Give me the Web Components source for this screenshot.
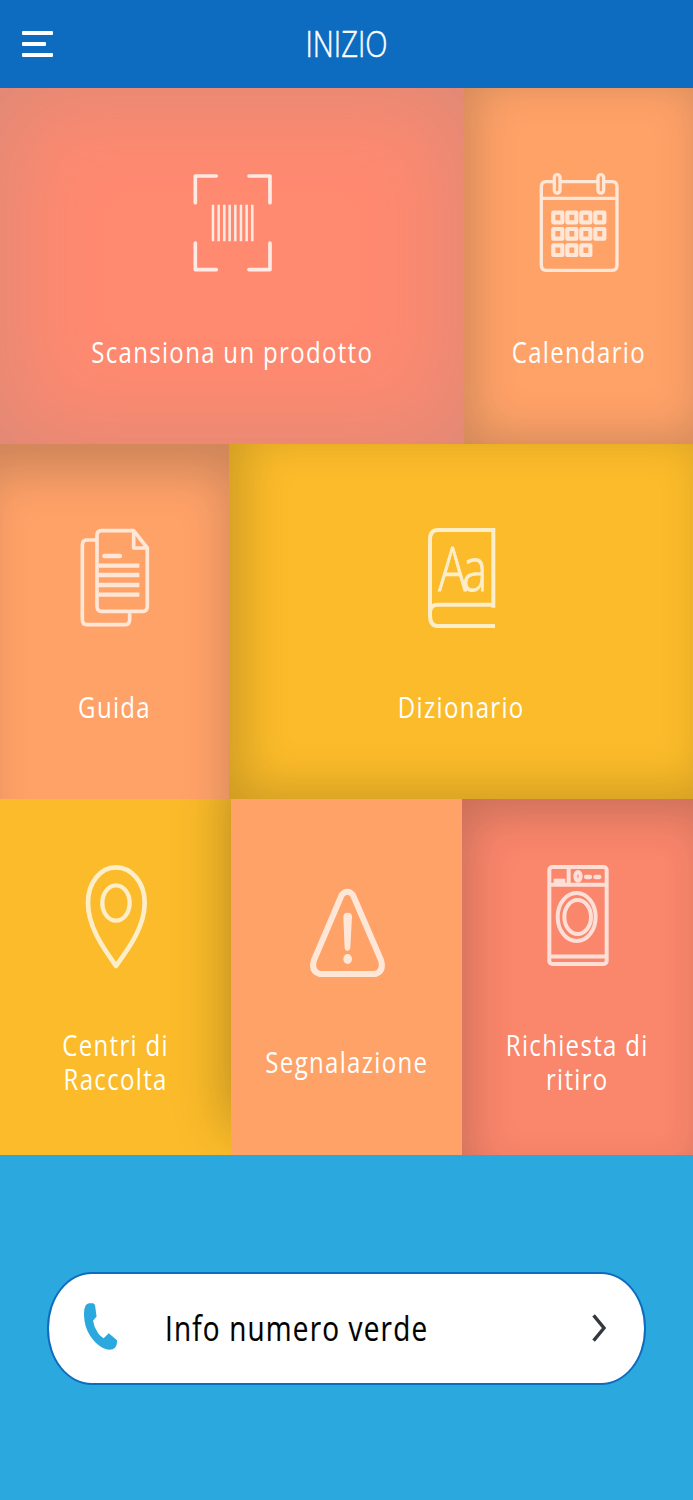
<!DOCTYPE html>
<html lang="it">
<head>
<meta charset="utf-8">
<title>Inizio</title>
<style>
    body {
        margin: 0;
        background: #2ba9df;
        font-family: "Open Sans", "Noto Sans", sans-serif;
    }
</style>
</head>
<body>
<home-page></home-page>

<script>
const icons = {
    scan: { box: '70 68 238 298', w: 79.3, h: 99.3, body: `
        <g stroke-width="11" stroke-linecap="round" stroke-linejoin="round">
            <path d="M77 157V77H140M238 77H301V157M77 278V358H140M238 358H301V278"/>
        </g>
        <path stroke-width="7.5" d="M130 163V273M147 163V273M164 163V273M180 163V273M197 163V273M214 163V273M231 163V273M248 163V273"/>` },
    calendar: { box: '58 38 240 300', w: 80, h: 100, body: `
        <g stroke-width="10">
            <path d="M102 64H79Q65 64 65 80V314Q65 330 79 330H278Q292 330 292 314V80Q292 64 278 64H254M233 64H123M65 114H292"/>
            <rect x="104" y="43" width="17" height="55" rx="8"/>
            <rect x="235" y="43" width="17" height="55" rx="8"/>
        </g>
        <g stroke-width="12.5" stroke-linejoin="round">
            <path d="M101 157h27v29h-27zM143 157h27v29h-27zM185 157h27v29h-27zM227 157h27v29h-27z"/>
            <path d="M101 206h27v29h-27zM143 206h27v29h-27zM185 206h27v29h-27zM227 206h27v29h-27z"/>
            <path d="M101 255h27v29h-27zM143 255h27v29h-27zM185 255h27v29h-27z"/>
        </g>` },
    guide: { box: '60 40 210 300', w: 70, h: 100, body: `
        <g stroke-width="11" stroke-linejoin="round">
            <path d="M110 76H80Q67 76 67 92V314Q67 330 80 330H196Q209 330 209 314V296"/>
            <path d="M124 48H221L262 100V274Q262 290 249 290H124Q111 290 111 274V64Q111 48 124 48Z"/>
            <path d="M221 52V100H260"/>
        </g>
        <g stroke-width="13">
            <path stroke-linecap="round" d="M133 124H180"/>
            <path d="M115 153H238M115 181H238M115 211H238M115 240H238"/>
        </g>` },
    dictionary: { box: '50 36 210 306', w: 70, h: 102, body: `
        <g stroke-width="12">
            <path d="M249 278V45H82Q59 45 59 75V300Q59 333 82 333H254"/>
            <path d="M59 295Q59 269 80 269H249"/>
        </g>
        <text transform="translate(84 229) scale(.78 1)" font-family="Open Sans" font-weight="300" font-size="181" letter-spacing="-17" fill="#fff" stroke-width="3">Aa</text>` },
    pin: { box: '46 42 186 314', w: 62, h: 104.6, body: `
        <path stroke-width="14" stroke-linejoin="round" d="M139 348C116 312 55 240 55 158C55 98 92 52 139 52S225 98 225 158C225 240 163 312 139 348Z"/>
        <ellipse cx="139" cy="159" rx="41" ry="53" stroke-width="13"/>` },
    warning: { box: '44 54 226 270', w: 75.3, h: 90, body: `
        <path stroke-width="18" d="M139 75Q156 55 173 75L257 270Q267 304 240 312H73Q46 304 56 270Z"/>
        <path fill="#fff" stroke="none" d="M144 140Q144 128 157 128T170 140L165 233Q163 242 156 242T148 233Z"/>
        <ellipse cx="157" cy="267" rx="13" ry="15" fill="#fff" stroke="none"/>` },
    washer: { box: '52 44 186 308', w: 62, h: 102.6, body: `
        <g stroke-width="12">
            <rect x="59" y="53" width="172" height="291" rx="9"/>
            <path d="M59 106H231M59 322H231M117 53V106"/>
            <ellipse cx="141" cy="203" rx="57" ry="72"/>
            <ellipse cx="144" cy="203" rx="40" ry="51"/>
            <ellipse cx="145" cy="81" rx="8" ry="13"/>
        </g>
        <path stroke-width="13" stroke-linecap="round" d="M169 83H181M197 83H209"/>
        <path stroke-width="18" d="M72 97H107"/>` },
    phone: { box: '113 128 84 140', w: 33, h: 47, body: `
        <path fill="#2ba9df" stroke="none" d="M113 158Q114 130 126 129H136Q141 130 142 142L145 168L136 181Q138 199 149 218Q155 228 163 233L176 218L197 239Q198 260 186 266Q174 270 160 261C136 244 112 210 113 158Z"/>` },
    chevron: { box: '0 0 14 28', w: 14, h: 28, body: `
        <path stroke="#333a3f" stroke-width="3.4" d="M1.6 1.4L12 14L1.6 26.6"/>` }
};

class AppIcon extends HTMLElement {
    constructor() {
        super();
        this.attachShadow({ mode: 'open' });
    }

    connectedCallback() {
        const icon = icons[this.getAttribute('name')];
        this.shadowRoot.innerHTML = `
            <style>
                :host { display: block; }
                svg { display: block; }
            </style>
            <svg width="${icon.w}" height="${icon.h}" viewBox="${icon.box}" preserveAspectRatio="none" fill="none" stroke="#fff">${icon.body}</svg>`;
    }
}

class AppHeader extends HTMLElement {
    constructor() {
        super();
        this.attachShadow({ mode: 'open' });
        this.shadowRoot.innerHTML = `
            <style>
                :host {
                    display: grid;
                    grid-template-columns: 60px 1fr 60px;
                    align-items: center;
                    box-sizing: border-box;
                    height: 88px;
                    background: #0d6cbf;
                    color: #fff;
                }
                .menu {
                    display: flex;
                    flex-direction: column;
                    gap: 7px;
                    padding-left: 22px;
                }
                .menu i {
                    width: 31px;
                    height: 4px;
                    border-radius: 1px;
                    background: #fff;
                }
                .menu i:nth-child(2) { width: 24px; }
                h1 {
                    margin: 0;
                    font-size: 36px;
                    font-weight: 300;
                    line-height: 40px;
                    text-align: center;
                    transform: scaleX(.81);
                    -webkit-text-stroke: .5px #fff;
                }
            </style>
            <div class="menu"><i></i><i></i><i></i></div>
            <h1><slot></slot></h1>`;
    }
}

class MenuTile extends HTMLElement {
    constructor() {
        super();
        this.attachShadow({ mode: 'open' });
    }

    connectedCallback() {
        this.shadowRoot.innerHTML = `
            <style>
                :host {
                    display: grid;
                    grid-template-rows: var(--label-top, 229px) 68px;
                    justify-items: center;
                    align-content: start;
                    background: var(--tile-color);
                    color: #fff;
                }
                app-icon {
                    margin: var(--icon-top, 84px) 0 0 var(--icon-left, 0px);
                    opacity: var(--icon-opacity, .74);
                }
                .label {
                    align-self: center;
                    font-size: 30px;
                    line-height: 34px;
                    letter-spacing: 1.65px;
                    text-align: center;
                    white-space: nowrap;
                    transform: scaleX(.8);
                }
            </style>
            <app-icon name="${this.getAttribute('icon')}"></app-icon>
            <div class="label"><slot></slot></div>`;
    }
}

class InfoButton extends HTMLElement {
    constructor() {
        super();
        this.attachShadow({ mode: 'open' });
        this.shadowRoot.innerHTML = `
            <style>
                :host {
                    display: flex;
                    align-items: center;
                    box-sizing: border-box;
                    height: 113px;
                    padding: 0 38px 0 35px;
                    border: 2px solid #0d6cbf;
                    border-radius: 45px / 56px;
                    background: #fff;
                    color: #000;
                }
                .phone { margin: -5px 48px 0 0; }
                .text {
                    flex: 1;
                    margin-bottom: 2px;
                    font-size: 34px;
                    line-height: 40px;
                    letter-spacing: 1.45px;
                    white-space: nowrap;
                    transform: scaleX(.82);
                    transform-origin: left;
                    -webkit-text-stroke: .2px #000;
                }
                .chevron { margin: -2px 0 0; }
            </style>
            <app-icon class="phone" name="phone"></app-icon>
            <div class="text"><slot></slot></div>
            <app-icon class="chevron" name="chevron"></app-icon>`;
    }
}

class HomePage extends HTMLElement {
    constructor() {
        super();
        this.attachShadow({ mode: 'open' });
        this.shadowRoot.innerHTML = `
            <style>
                :host {
                    display: flex;
                    flex-direction: column;
                    height: 1500px;
                    overflow: hidden;
                    --coral: #ff8a70;
                    --orange: #ffa268;
                    --yellow: #fbbb2a;
                }
                .row { display: grid; }
                .row1 { grid-template-columns: 464px 1fr; height: 356px; --label-top: 230px; }
                .row2 { grid-template-columns: 229px 1fr; height: 355px; }
                .row3 { grid-template-columns: repeat(3, 1fr); height: 356px; overflow: hidden; }

                .scan {
                    --tile-color: var(--coral);
                    --icon-top: 85px;
                    --icon-left: 2px;
                    --icon-opacity: .82;
                    box-shadow: inset 0 0 100px rgba(130, 136, 138, .31);
                }
                .calendar {
                    --tile-color: var(--orange);
                    --icon-top: 85px;
                    box-shadow: inset 9px -7px 45px rgba(30, 40, 40, .21);
                }
                .guide {
                    --tile-color: var(--orange);
                    box-shadow: inset -8px 36px 45px -8px rgba(30, 30, 40, .22);
                }
                .dictionary {
                    --tile-color: var(--yellow);
                    --icon-top: 83px;
                    --icon-left: 2px;
                    box-shadow: inset 14px -10px 45px rgba(40, 40, 10, .21);
                }
                .centers {
                    --tile-color: var(--yellow);
                    --icon-top: 65px;
                }
                .report {
                    --tile-color: var(--orange);
                    --icon-top: 89px;
                    --icon-left: 2px;
                    box-shadow: 0 -30px 50px rgba(40, 40, 10, .35);
                }
                .pickup {
                    --tile-color: #fa866b;
                    --icon-top: 65px;
                    position: relative;
                    box-shadow: inset 11px 19px 45px -5px rgba(40, 30, 30, .23);
                }
                footer {
                    flex: 1;
                    padding: 117px 47px 0;
                    background: #2ba9df;
                }
            </style>
            <app-header>INIZIO</app-header>
            <div class="row row1">
                <menu-tile class="scan" icon="scan">Scansiona un prodotto</menu-tile>
                <menu-tile class="calendar" icon="calendar">Calendario</menu-tile>
            </div>
            <div class="row row2">
                <menu-tile class="guide" icon="guide">Guida</menu-tile>
                <menu-tile class="dictionary" icon="dictionary">Dizionario</menu-tile>
            </div>
            <div class="row row3">
                <menu-tile class="centers" icon="pin">Centri di<br>Raccolta</menu-tile>
                <menu-tile class="report" icon="warning">Segnalazione</menu-tile>
                <menu-tile class="pickup" icon="washer">Richiesta di<br>ritiro</menu-tile>
            </div>
            <footer>
                <info-button>Info numero verde</info-button>
            </footer>`;
    }
}

customElements.define('app-icon', AppIcon);
customElements.define('app-header', AppHeader);
customElements.define('menu-tile', MenuTile);
customElements.define('info-button', InfoButton);
customElements.define('home-page', HomePage);
</script>
</body>
</html>
